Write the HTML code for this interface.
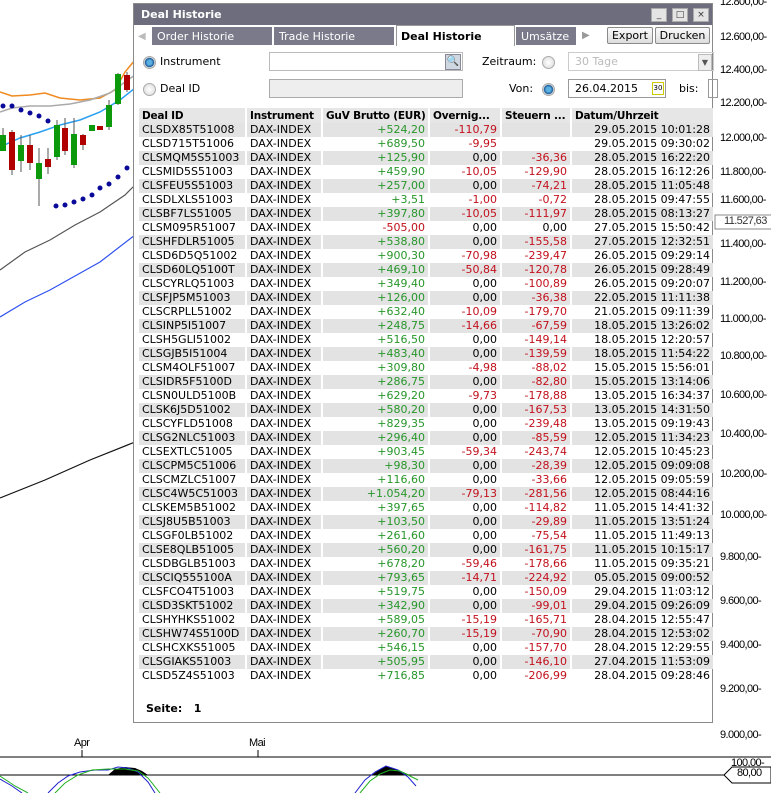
<!DOCTYPE html>
<html><head><meta charset="utf-8"><style>
body{margin:0;width:771px;height:793px;background:#fff;position:relative;overflow:hidden;font-family:"DejaVu Sans",Verdana,sans-serif;}
.ax{position:absolute;left:720px;font-family:"Liberation Sans",Arial,sans-serif;font-size:11px;letter-spacing:-0.6px;color:#000;white-space:nowrap}
#dlg{position:absolute;left:133px;top:3px;width:578px;height:718px;background:#fff;border:1px solid #8a8a8a;}
#tb{position:absolute;left:0;top:0;width:578px;height:21px;background:#6e6d7d;color:#fff;font-weight:bold;font-size:11px;line-height:21px;}
#tb span{margin-left:7px}
.wb{position:absolute;top:4px;width:14px;height:12px;background:#e4e4e4;border:1px solid #aaa;font-size:9px;line-height:12px;text-align:center;color:#333;font-weight:normal}
#tabs{position:absolute;left:0;top:21px;width:578px;height:20px;background:#fff;}
.tab{position:absolute;top:2px;height:18px;background:#7b7a8a;color:#fff;font-size:11px;line-height:20px;padding-left:5px;box-sizing:border-box}
.btn{position:absolute;top:2px;height:15px;border:1px solid #8a8a8a;border-radius:2px;background:linear-gradient(#fafafa,#ddd);font-size:11px;line-height:15px;text-align:center;color:#000}
.lbl{position:absolute;font-size:11px;color:#000}
.rad{position:absolute;width:11px;height:11px;border-radius:50%;border:1px solid #aaa;background:radial-gradient(#fff,#d8d8d8)}
.rad.on{background:radial-gradient(#5ab0e0 30%,#1a5a9a 55%,#ddd 65%)}
.inp{position:absolute;height:19px;border:1px solid #999;box-sizing:border-box;font-size:11px;line-height:17px;padding-left:6px}
table{position:absolute;left:3px;top:104px;border-collapse:collapse;table-layout:fixed;font-size:11px;width:575px}
td,th{height:14px;padding:0 3px;white-space:nowrap;overflow:hidden;line-height:14px;border-left:2px solid #fff}
th{text-align:left;font-weight:bold;background:#e6e6e6;height:15px;font-size:10.5px;letter-spacing:-0.2px}
td:nth-child(n+3){text-align:right}
tr:nth-child(even) td{background:#e3e3e3}
.g{color:#27962a}.r{color:#c3101c}
</style></head><body>
<svg width="771" height="793" style="position:absolute;left:0;top:0">
<polyline fill="none" stroke="#f08a20" stroke-width="1.5" points="0,92 12,96 30,95 45,93 60,98 80,100 100,98 115,90 125,72 135,60"/>
<polyline fill="none" stroke="#aaa" stroke-width="1.5" points="0,112 12,108 30,106 50,106 70,104 90,100 110,93 125,82 135,75"/>
<polyline fill="none" stroke="#2aa0f0" stroke-width="1.5" points="0,147 20,138 40,132 60,125 80,120 100,112 120,100 135,88"/>
<polyline fill="none" stroke="#555" stroke-width="1.2" points="0,270 25,252 50,240 75,225 100,212 125,195 135,185"/>
<polyline fill="none" stroke="#3050f0" stroke-width="1.2" points="0,317 25,302 50,290 75,276 100,262 135,235"/>
<polyline fill="none" stroke="#111" stroke-width="1.2" points="0,498 45,480 90,460 135,442"/>
<g fill="#0a0a9a"><circle cx="3" cy="106" r="2.5"/><circle cx="12" cy="106" r="2.5"/><circle cx="21" cy="110" r="2.5"/><circle cx="30" cy="113" r="2.5"/><circle cx="39" cy="116" r="2.5"/><circle cx="48" cy="121" r="2.5"/><circle cx="56" cy="206" r="2.5"/><circle cx="65" cy="205" r="2.5"/><circle cx="74" cy="202" r="2.5"/><circle cx="83" cy="199" r="2.5"/><circle cx="92" cy="195" r="2.5"/><circle cx="100" cy="188" r="2.5"/><circle cx="109" cy="184" r="2.5"/><circle cx="118" cy="177" r="2.5"/><circle cx="127" cy="168" r="2.5"/></g>
<g stroke="#555"><line x1="3" y1="128" x2="3" y2="150"/><line x1="12" y1="130" x2="12" y2="175"/><line x1="21" y1="135" x2="21" y2="172"/><line x1="30" y1="135" x2="30" y2="170"/><line x1="39" y1="148" x2="39" y2="206"/><line x1="48" y1="148" x2="48" y2="174"/><line x1="57" y1="120" x2="57" y2="160"/><line x1="65" y1="118" x2="65" y2="155"/><line x1="74" y1="118" x2="74" y2="168"/><line x1="83" y1="134" x2="83" y2="150"/><line x1="109" y1="100" x2="109" y2="130"/><line x1="118" y1="73" x2="118" y2="105"/><line x1="127" y1="72" x2="127" y2="92"/></g>
<g fill="#0c9a0c"><rect x="0" y="135" width="6" height="16"/><rect x="18" y="145" width="6" height="16"/><rect x="36" y="163" width="6" height="16"/><rect x="54" y="125" width="6" height="32"/><rect x="71" y="134" width="6" height="31"/><rect x="89" y="125" width="6" height="6"/><rect x="106" y="105" width="6" height="22"/><rect x="115" y="74" width="6" height="30"/></g>
<g fill="#b00000"><rect x="9" y="132" width="6" height="38"/><rect x="27" y="145" width="6" height="18"/><rect x="45" y="159" width="6" height="8"/><rect x="62" y="128" width="6" height="23"/><rect x="80" y="135" width="6" height="10"/><rect x="97" y="126" width="6" height="4"/><rect x="124" y="75" width="6" height="15"/></g>
<line x1="0" y1="757" x2="771" y2="757" stroke="#000"/><line x1="0" y1="775" x2="725" y2="775" stroke="#000"/>
<line x1="82" y1="750" x2="82" y2="757" stroke="#000"/><line x1="258" y1="750" x2="258" y2="757" stroke="#000"/>
<path d="M108,775 L115,769 L125,767 L135,768 L142,771 L148,775Z" fill="#000"/>
<path d="M372,775 L380,769 L386,766 L395,769 L403,772 L410,775Z" fill="#000"/>
<polyline fill="none" stroke="#2020d0" points="0,779 12,786 22,793"/>
<polyline fill="none" stroke="#2020d0" points="48,793 58,783 68,776 80,772 95,770 108,770 118,767 128,768 138,772 148,782 155,793"/>
<polyline fill="none" stroke="#20b020" points="0,776 15,786 28,793"/>
<polyline fill="none" stroke="#20b020" points="55,793 65,783 78,775 92,770 108,769 125,769 138,771 148,778 160,793"/>
<polyline fill="none" stroke="#2020d0" points="355,793 365,780 375,772 386,766 398,770 408,777 416,786"/>
<polyline fill="none" stroke="#20b020" points="360,793 370,781 380,774 390,770 400,771 410,776 418,780"/>
<path d="M724,775 L732,767 L771,767 L771,783 L732,783Z" fill="#fff" stroke="#000"/>
<rect x="715" y="215" width="60" height="14" fill="#fff" stroke="#888"/>
</svg>
<div class="ax" style="top:-4px">12.800,00-</div>
<div class="ax" style="top:31px">12.600,00-</div>
<div class="ax" style="top:64px">12.400,00-</div>
<div class="ax" style="top:97px">12.200,00-</div>
<div class="ax" style="top:132px">12.000,00-</div>
<div class="ax" style="top:166px">11.800,00-</div>
<div class="ax" style="top:194px">11.600,00-</div>
<div class="ax" style="top:215px;left:724px;color:#333">11.527,63</div>
<div class="ax" style="top:238px">11.400,00-</div>
<div class="ax" style="top:276px">11.200,00-</div>
<div class="ax" style="top:313px">11.000,00-</div>
<div class="ax" style="top:350px">10.800,00-</div>
<div class="ax" style="top:389px">10.600,00-</div>
<div class="ax" style="top:428px">10.400,00-</div>
<div class="ax" style="top:468px">10.200,00-</div>
<div class="ax" style="top:509px">10.000,00-</div>
<div class="ax" style="top:551px">9.800,00-</div>
<div class="ax" style="top:595px">9.600,00-</div>
<div class="ax" style="top:639px">9.400,00-</div>
<div class="ax" style="top:683px">9.200,00-</div>
<div class="ax" style="top:729px">9.000,00-</div>
<div class="ax" style="top:757px;left:731px">100,00-</div>
<div class="ax" style="top:767px;left:737px">80,00</div>
<div class="ax" style="top:737px;left:74px">Apr</div>
<div class="ax" style="top:737px;left:249px">Mai</div>

<div id="dlg">
<div id="tb"><span>Deal Historie</span>
<div class="wb" style="left:517px">_</div><div class="wb" style="left:538px">□</div><div class="wb" style="left:559px">×</div></div>
<div id="tabs">
<div style="position:absolute;left:4px;top:6px;color:#bbb;font-size:10px">◀</div>
<div class="tab" style="left:18px;width:120px">Order Historie</div>
<div class="tab" style="left:140px;width:120px">Trade Historie</div>
<div style="position:absolute;left:262px;top:0;width:119px;height:21px;border:1px solid #999;border-bottom:none;background:#fff;font-weight:bold;font-size:11px;line-height:21px;padding-left:4px;box-sizing:border-box">Deal Historie</div>
<div class="tab" style="left:382px;width:60px">Umsätze</div>
<div style="position:absolute;left:448px;top:5px;color:#999;font-size:10px">▶</div>
<div class="btn" style="left:473px;width:44px">Export</div>
<div class="btn" style="left:521px;width:53px">Drucken</div>
</div>
<div class="rad on" style="left:9px;top:52px"></div><div class="lbl" style="left:26px;top:51px">Instrument</div>
<div class="inp" style="left:135px;top:48px;width:194px;border-color:#bbb"></div>
<div style="position:absolute;left:311px;top:50px;width:14px;height:14px;background:#cfd8e0;border:1px solid #889;font-size:10px;line-height:14px;text-align:center">🔍</div>
<div class="rad" style="left:9px;top:79px"></div><div class="lbl" style="left:26px;top:78px">Deal ID</div>
<div class="inp" style="left:135px;top:75px;width:194px;background:#eee;border-color:#aaa"></div>
<div class="lbl" style="left:348px;top:51px">Zeitraum:</div>
<div class="rad" style="left:408px;top:52px"></div>
<div class="inp" style="left:434px;top:48px;width:146px;color:#bbb;border-color:#ccc">30 Tage</div>
<div style="position:absolute;left:564px;top:50px;width:12px;height:15px;background:#eee;border:1px solid #bbb;font-size:8px;line-height:15px;text-align:center;color:#555">▼</div>
<div class="lbl" style="left:375px;top:78px">Von:</div>
<div class="rad on" style="left:408px;top:79px"></div>
<div class="inp" style="left:434px;top:75px;width:98px">26.04.2015</div>
<div style="position:absolute;left:518px;top:78px;width:10px;height:11px;border:1px solid #cc0;font-size:7px;line-height:11px;text-align:center;background:#fff">30</div>
<div class="lbl" style="left:545px;top:78px">bis:</div>
<div class="inp" style="left:574px;top:75px;width:10px"></div>
<table>
<colgroup><col style="width:108px"><col style="width:76px"><col style="width:107px"><col style="width:72px"><col style="width:70px"><col style="width:142px"></colgroup>
<tr><th>Deal ID</th><th>Instrument</th><th>GuV Brutto (EUR)</th><th>Overnig...</th><th>Steuern ...</th><th>Datum/Uhrzeit</th></tr>
<tr><td>CLSDX85T51008</td><td>DAX-INDEX</td><td class="g">+524,20</td><td class="r">-110,79</td><td></td><td>29.05.2015 10:01:28</td></tr>
<tr><td>CLSD715T51006</td><td>DAX-INDEX</td><td class="g">+689,50</td><td class="r">-9,95</td><td></td><td>29.05.2015 09:30:02</td></tr>
<tr><td>CLSMQM5S51003</td><td>DAX-INDEX</td><td class="g">+125,90</td><td>0,00</td><td class="r">-36,36</td><td>28.05.2015 16:22:20</td></tr>
<tr><td>CLSMID5S51003</td><td>DAX-INDEX</td><td class="g">+459,90</td><td class="r">-10,05</td><td class="r">-129,90</td><td>28.05.2015 16:12:26</td></tr>
<tr><td>CLSFEU5S51003</td><td>DAX-INDEX</td><td class="g">+257,00</td><td>0,00</td><td class="r">-74,21</td><td>28.05.2015 11:05:48</td></tr>
<tr><td>CLSDLXLS51003</td><td>DAX-INDEX</td><td class="g">+3,51</td><td class="r">-1,00</td><td class="r">-0,72</td><td>28.05.2015 09:47:55</td></tr>
<tr><td>CLSBF7LS51005</td><td>DAX-INDEX</td><td class="g">+397,80</td><td class="r">-10,05</td><td class="r">-111,97</td><td>28.05.2015 08:13:27</td></tr>
<tr><td>CLSM095R51007</td><td>DAX-INDEX</td><td class="r">-505,00</td><td>0,00</td><td>0,00</td><td>27.05.2015 15:50:42</td></tr>
<tr><td>CLSHFDLR51005</td><td>DAX-INDEX</td><td class="g">+538,80</td><td>0,00</td><td class="r">-155,58</td><td>27.05.2015 12:32:51</td></tr>
<tr><td>CLSD6D5Q51002</td><td>DAX-INDEX</td><td class="g">+900,30</td><td class="r">-70,98</td><td class="r">-239,47</td><td>26.05.2015 09:29:14</td></tr>
<tr><td>CLSD60LQ5100T</td><td>DAX-INDEX</td><td class="g">+469,10</td><td class="r">-50,84</td><td class="r">-120,78</td><td>26.05.2015 09:28:49</td></tr>
<tr><td>CLSCYRLQ51003</td><td>DAX-INDEX</td><td class="g">+349,40</td><td>0,00</td><td class="r">-100,89</td><td>26.05.2015 09:20:07</td></tr>
<tr><td>CLSFJP5M51003</td><td>DAX-INDEX</td><td class="g">+126,00</td><td>0,00</td><td class="r">-36,38</td><td>22.05.2015 11:11:38</td></tr>
<tr><td>CLSCRPLL51002</td><td>DAX-INDEX</td><td class="g">+632,40</td><td class="r">-10,09</td><td class="r">-179,70</td><td>21.05.2015 09:11:39</td></tr>
<tr><td>CLSINP5I51007</td><td>DAX-INDEX</td><td class="g">+248,75</td><td class="r">-14,66</td><td class="r">-67,59</td><td>18.05.2015 13:26:02</td></tr>
<tr><td>CLSH5GLI51002</td><td>DAX-INDEX</td><td class="g">+516,50</td><td>0,00</td><td class="r">-149,14</td><td>18.05.2015 12:20:57</td></tr>
<tr><td>CLSGJB5I51004</td><td>DAX-INDEX</td><td class="g">+483,40</td><td>0,00</td><td class="r">-139,59</td><td>18.05.2015 11:54:22</td></tr>
<tr><td>CLSM4OLF51007</td><td>DAX-INDEX</td><td class="g">+309,80</td><td class="r">-4,98</td><td class="r">-88,02</td><td>15.05.2015 15:56:01</td></tr>
<tr><td>CLSIDR5F5100D</td><td>DAX-INDEX</td><td class="g">+286,75</td><td>0,00</td><td class="r">-82,80</td><td>15.05.2015 13:14:06</td></tr>
<tr><td>CLSN0ULD5100B</td><td>DAX-INDEX</td><td class="g">+629,20</td><td class="r">-9,73</td><td class="r">-178,88</td><td>13.05.2015 16:34:37</td></tr>
<tr><td>CLSK6J5D51002</td><td>DAX-INDEX</td><td class="g">+580,20</td><td>0,00</td><td class="r">-167,53</td><td>13.05.2015 14:31:50</td></tr>
<tr><td>CLSCYFLD51008</td><td>DAX-INDEX</td><td class="g">+829,35</td><td>0,00</td><td class="r">-239,48</td><td>13.05.2015 09:19:43</td></tr>
<tr><td>CLSG2NLC51003</td><td>DAX-INDEX</td><td class="g">+296,40</td><td>0,00</td><td class="r">-85,59</td><td>12.05.2015 11:34:23</td></tr>
<tr><td>CLSEXTLC51005</td><td>DAX-INDEX</td><td class="g">+903,45</td><td class="r">-59,34</td><td class="r">-243,74</td><td>12.05.2015 10:45:23</td></tr>
<tr><td>CLSCPM5C51006</td><td>DAX-INDEX</td><td class="g">+98,30</td><td>0,00</td><td class="r">-28,39</td><td>12.05.2015 09:09:08</td></tr>
<tr><td>CLSCMZLC51007</td><td>DAX-INDEX</td><td class="g">+116,60</td><td>0,00</td><td class="r">-33,66</td><td>12.05.2015 09:05:59</td></tr>
<tr><td>CLSC4W5C51003</td><td>DAX-INDEX</td><td class="g">+1.054,20</td><td class="r">-79,13</td><td class="r">-281,56</td><td>12.05.2015 08:44:16</td></tr>
<tr><td>CLSKEM5B51002</td><td>DAX-INDEX</td><td class="g">+397,65</td><td>0,00</td><td class="r">-114,82</td><td>11.05.2015 14:41:32</td></tr>
<tr><td>CLSJ8U5B51003</td><td>DAX-INDEX</td><td class="g">+103,50</td><td>0,00</td><td class="r">-29,89</td><td>11.05.2015 13:51:24</td></tr>
<tr><td>CLSGF0LB51002</td><td>DAX-INDEX</td><td class="g">+261,60</td><td>0,00</td><td class="r">-75,54</td><td>11.05.2015 11:49:13</td></tr>
<tr><td>CLSE8QLB51005</td><td>DAX-INDEX</td><td class="g">+560,20</td><td>0,00</td><td class="r">-161,75</td><td>11.05.2015 10:15:17</td></tr>
<tr><td>CLSDBGLB51003</td><td>DAX-INDEX</td><td class="g">+678,20</td><td class="r">-59,46</td><td class="r">-178,66</td><td>11.05.2015 09:35:21</td></tr>
<tr><td>CLSCIQ555100A</td><td>DAX-INDEX</td><td class="g">+793,65</td><td class="r">-14,71</td><td class="r">-224,92</td><td>05.05.2015 09:00:52</td></tr>
<tr><td>CLSFCO4T51003</td><td>DAX-INDEX</td><td class="g">+519,75</td><td>0,00</td><td class="r">-150,09</td><td>29.04.2015 11:03:12</td></tr>
<tr><td>CLSD3SKT51002</td><td>DAX-INDEX</td><td class="g">+342,90</td><td>0,00</td><td class="r">-99,01</td><td>29.04.2015 09:26:09</td></tr>
<tr><td>CLSHYHKS51002</td><td>DAX-INDEX</td><td class="g">+589,05</td><td class="r">-15,19</td><td class="r">-165,71</td><td>28.04.2015 12:55:47</td></tr>
<tr><td>CLSHW74S5100D</td><td>DAX-INDEX</td><td class="g">+260,70</td><td class="r">-15,19</td><td class="r">-70,90</td><td>28.04.2015 12:53:02</td></tr>
<tr><td>CLSHCXKS51005</td><td>DAX-INDEX</td><td class="g">+546,15</td><td>0,00</td><td class="r">-157,70</td><td>28.04.2015 12:29:55</td></tr>
<tr><td>CLSGIAKS51003</td><td>DAX-INDEX</td><td class="g">+505,95</td><td>0,00</td><td class="r">-146,10</td><td>27.04.2015 11:53:09</td></tr>
<tr><td>CLSD5Z4S51003</td><td>DAX-INDEX</td><td class="g">+716,85</td><td>0,00</td><td class="r">-206,99</td><td>28.04.2015 09:28:46</td></tr>
</table>
<div class="lbl" style="left:12px;top:698px;font-weight:bold">Seite:&nbsp;&nbsp; 1</div>
</div>
</body></html>
